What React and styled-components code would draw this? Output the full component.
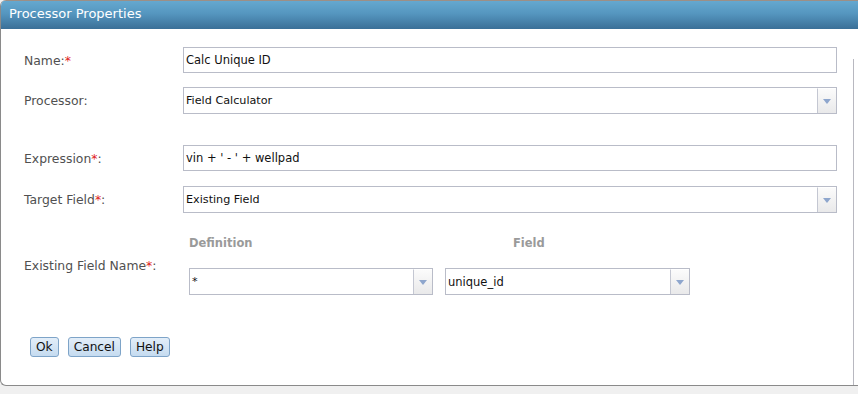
import React from "react";
import styled, { createGlobalStyle } from "styled-components";

const Global = createGlobalStyle`
  html, body { margin: 0; padding: 0; background: #f0f0f0; }
  body { font-family: "DejaVu Sans", Verdana, sans-serif; }
  * { box-sizing: border-box; }
`;

const Dialog = styled.div`
  width: 858px;
  height: 386px;
  background: #fff;
  border-left: 1px solid #8a8a8a;
  border-bottom: 1px solid #8a8a8a;
  border-radius: 6px 0 0 6px;
  display: flex;
  flex-direction: column;
  overflow: hidden;
`;

const Header = styled.div`
  height: 29px;
  flex: none;
  background: linear-gradient(to bottom, #65a8cf 0%, #5596bf 45%, #3a6f97 100%);
  border-top: 1px solid #9c8f86;
  color: #fff;
  font-size: 13px;
  padding: 5px 0 0 8px;
`;

const Body = styled.div`
  flex: 1;
  display: flex;
`;

const Form = styled.div`
  flex: 1;
  padding: 18px 0 0 23px;
  display: flex;
  flex-direction: column;
`;

const Scroll = styled.div`
  width: 1px;
  margin: 30px 4px 0 0;
  background: #b8b8c0;
`;

const Row = styled.div`
  display: flex;
  align-items: center;
  margin-top: ${(p) => p.$mt || 0}px;
`;

const Label = styled.div`
  width: 159px;
  flex: none;
  font-size: 12.4px;
  color: #505050;
`;

const Req = styled.span`
  color: #e02020;
`;

const Input = styled.div`
  width: ${(p) => p.$w || 654}px;
  height: 26px;
  border: 1px solid #b9bcc8;
  background: #fff;
  font-size: 11.5px;
  color: #111;
  display: flex;
  align-items: center;
  padding-left: 2px;
`;

const Select = styled.div`
  width: ${(p) => p.$w || 654}px;
  height: 27px;
  border: 1px solid #b9bcc8;
  background: #fff;
  display: flex;
  align-items: stretch;
`;

const SelectText = styled.div`
  flex: 1;
  display: flex;
  align-items: center;
  padding-left: 2px;
  font-size: ${(p) => (p.$small ? 11.2 : 11.5)}px;
  color: #111;
`;

const Trigger = styled.div`
  width: 19px;
  border-left: 1px solid #c4c7d2;
  border-top: 1px solid #fff;
  background: linear-gradient(to bottom, #fbfbfb, #e9e9ea);
  display: flex;
  align-items: center;
  justify-content: center;
`;

const Arrow = () => (
  <svg width="8" height="5" viewBox="0 0 8 5">
    <polygon points="0,0 8,0 4,5" fill="#8ea6cd" />
  </svg>
);

const Sub = styled.div`
  display: grid;
  grid-template-columns: 244px 245px;
  column-gap: 12px;
  row-gap: 18px;
  margin-left: 6px;
`;

const ColHead = styled.div`
  font-size: 11.5px;
  font-weight: bold;
  color: #9a9a9a;
  padding-left: ${(p) => p.$pl || 0}px;
`;

const Buttons = styled.div`
  display: flex;
  gap: 9px;
  margin: 42px 0 0 6px;
`;

const Btn = styled.div`
  height: 20px;
  padding: 0 5px;
  border: 1px solid #7ea4c8;
  border-radius: 3px;
  background: linear-gradient(to bottom, #e3eef9, #c5dbf0);
  font-size: 12.2px;
  color: #111;
  display: flex;
  align-items: center;
`;

export default function App() {
  return (
    <>
      <Global />
      <Dialog>
        <Header>Processor Properties</Header>
        <Body>
          <Form>
            <Row>
              <Label>
                Name:<Req>*</Req>
              </Label>
              <Input>Calc Unique ID</Input>
            </Row>
            <Row $mt={14}>
              <Label>Processor:</Label>
              <Select>
                <SelectText $small>Field Calculator</SelectText>
                <Trigger>
                  <Arrow />
                </Trigger>
              </Select>
            </Row>
            <Row $mt={31}>
              <Label>
                Expression<Req>*</Req>:
              </Label>
              <Input>vin + ' - ' + wellpad</Input>
            </Row>
            <Row $mt={15}>
              <Label>
                Target Field<Req>*</Req>:
              </Label>
              <Select>
                <SelectText $small>Existing Field</SelectText>
                <Trigger>
                  <Arrow />
                </Trigger>
              </Select>
            </Row>
            <Row $mt={23}>
              <Label>
                Existing Field Name<Req>*</Req>:
              </Label>
              <Sub>
                <ColHead>Definition</ColHead>
                <ColHead $pl={68}>Field</ColHead>
                <Select $w={244}>
                  <SelectText $small>*</SelectText>
                  <Trigger>
                    <Arrow />
                  </Trigger>
                </Select>
                <Select $w={245}>
                  <SelectText>unique_id</SelectText>
                  <Trigger>
                    <Arrow />
                  </Trigger>
                </Select>
              </Sub>
            </Row>
            <Buttons>
              <Btn>Ok</Btn>
              <Btn>Cancel</Btn>
              <Btn>Help</Btn>
            </Buttons>
          </Form>
          <Scroll />
        </Body>
      </Dialog>
    </>
  );
}
